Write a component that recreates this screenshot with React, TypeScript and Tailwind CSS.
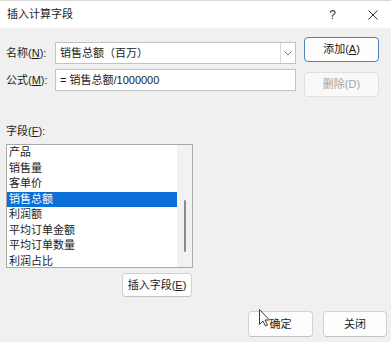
import React from "react";

const fields = ["产品", "销售量", "客单价", "销售总额", "利润额", "平均订单金额", "平均订单数量", "利润占比"];

const Btn = ({
  children,
  className = "",
  disabled = false,
  primary = false,
}: {
  children: React.ReactNode;
  className?: string;
  disabled?: boolean;
  primary?: boolean;
}) => (
  <div
    className={
      "flex items-center justify-center rounded-[4px] border " +
      (primary
        ? "bg-[#fdfdfd] border-[#4f83b8] "
        : disabled
        ? "bg-[#f9f9f9] border-[#e0e0e0] text-[#a3a3a3] "
        : "bg-[#fdfdfd] border-[#d2d2d2] border-b-[#c2c2c2] ") +
      className
    }
  >
    {children}
  </div>
);

const App = () => {
  return (
    <div className="relative w-[391px] h-[342px] overflow-hidden bg-[#f0f0f0] text-[11px] text-[#1c1c1c] font-['Liberation_Sans','Noto_Sans_CJK_SC',sans-serif]">
      {/* title bar */}
      <div className="h-[28px] bg-white border-t border-[#d9d9d9] flex items-center pl-[7px] pr-[13px]">
        <span className="leading-none">插入计算字段</span>
        <span className="ml-auto text-[12px] text-[#333]">?</span>
        <svg className="ml-[32px]" width="10" height="10" viewBox="0 0 10 10">
          <path d="M0.5 0.5 L9.5 9.5 M9.5 0.5 L0.5 9.5" stroke="#333" strokeWidth="1" />
        </svg>
      </div>

      {/* name / formula */}
      <div className="flex pl-[6px]">
        <div className="pt-[14px] flex flex-col gap-[5px]">
          <div className="flex items-center h-[22px]">
            <span className="w-[49px]">
              名称(<span className="underline">N</span>):
            </span>
            <div className="w-[241px] h-[22px] bg-white border border-[#c2c2c2] flex items-center">
              <span className="pl-[4px] flex-1">销售总额（百万）</span>
              <div className="w-[15px] h-full border-l border-[#dadada] flex items-center justify-center">
                <svg width="8" height="5" viewBox="0 0 8 5">
                  <path d="M0.5 0.5 L4 4 L7.5 0.5" fill="none" stroke="#777" strokeWidth="1" />
                </svg>
              </div>
            </div>
          </div>
          <div className="flex items-center h-[22px]">
            <span className="w-[49px]">
              公式(<span className="underline">M</span>):
            </span>
            <div className="w-[241px] h-[22px] bg-white border border-[#c2c2c2] flex items-center pl-[4px]">
              = 销售总额/1000000
            </div>
          </div>
        </div>
        <div className="ml-[8px] pt-[9px] flex flex-col gap-[10px]">
          <Btn primary className="w-[75px] h-[25px]">
            添加(<span className="underline">A</span>)
          </Btn>
          <Btn disabled className="w-[75px] h-[25px]">
            删除(D)
          </Btn>
        </div>
      </div>

      {/* fields */}
      <div className="mt-[27px] pl-[6px] h-[15px] leading-[15px]">
        字段(<span className="underline">F</span>):
      </div>
      <div className="mt-[5px] ml-[6px] w-[187px] h-[124px] border border-[#a9a9a9] bg-white flex">
        <div className="flex-1 flex flex-col">
          {fields.map((f) => (
            <div
              key={f}
              className={
                "h-[15.5px] leading-[15.5px] pl-[2px] " +
                (f === "销售总额" ? "bg-[#0a6fd6] text-white" : "")
              }
            >
              {f}
            </div>
          ))}
        </div>
        <div className="w-[15px] bg-[#f2f2f2] flex justify-center pt-[55px]">
          <div className="w-[2px] h-[52px] rounded-full bg-[#8a8a8a]" />
        </div>
      </div>

      <Btn className="mt-[5px] ml-[122px] w-[70px] h-[24px]">
        插入字段(<span className="underline">E</span>)
      </Btn>

      <div className="mt-[14px] flex justify-end gap-[10px] pr-[4px]">
        <Btn className="w-[65px] h-[26px]">确定</Btn>
        <Btn className="w-[64px] h-[26px]">关闭</Btn>
      </div>

      {/* mouse cursor */}
      <svg className="absolute left-[259px] top-[309px]" width="11" height="18" viewBox="0 0 11 18">
        <path
          d="M0.5 0.5 L0.5 15.5 L4 12 L6.5 17 L8.5 16 L6 11 L10.5 11 Z"
          fill="white"
          stroke="#3a3a3a"
          strokeWidth="1"
          strokeLinejoin="round"
        />
      </svg>
    </div>
  );
};

export default App;
